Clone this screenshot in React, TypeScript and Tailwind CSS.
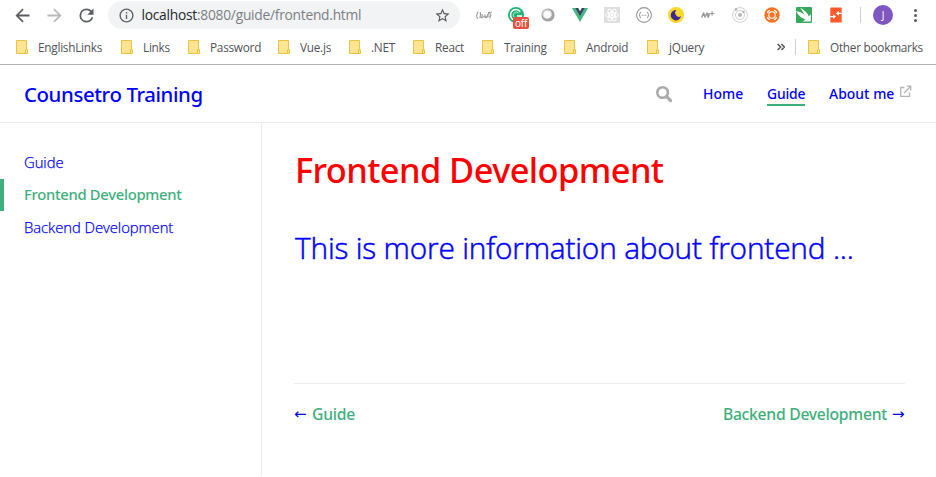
import type { ReactNode } from 'react';

function Glyph({ d, color, size = 21 }: { d: string; color: string; size?: number }) {
  return (
    <svg width={size} height={size} viewBox="0 0 24 24" fill={color} className="shrink-0">
      <path d={d} />
    </svg>
  );
}

function Slot({ children }: { children: ReactNode }) {
  return <div className="relative flex h-4 w-8 shrink-0 items-center justify-center">{children}</div>;
}

function Ext({ children }: { children: ReactNode }) {
  return (
    <svg width="16" height="16" viewBox="0 0 16 16" fill="none" className="shrink-0">
      {children}
    </svg>
  );
}

function Extensions() {
  return (
    <div className="ml-2 flex">
      <Slot>
        <Ext>
          <g stroke="#9a9a9a" strokeWidth="1.1" fill="none">
            <path d="M2.2 4.6Q-.6 8.3 1.8 12M4.4 5v5.5q2.3.8 2.4-1.2T4.6 8M9 7.5v2.8q1.8.8 2.5-.7V7.2M11.6 10l1-4.8M13.4 5.2h2.4M13 5l2 3.4-1.4 3" />
            <path d="M3 10.2 14 9" stroke="#a5a5a5" />
          </g>
        </Ext>
      </Slot>
      <Slot>
        <Ext>
          <circle cx="8" cy="8" r="8" fill="#1db574" />
          <path d="M12.3 4.8A5.4 5.4 0 1 0 13.2 9H9" stroke="#fff" strokeWidth="1.6" />
          <path d="M10.6 6.2A3 3 0 1 0 10.6 10" stroke="#c6eddc" strokeWidth=".9" />
        </Ext>
        <span className="absolute left-[13px] top-[10px] flex h-3 w-4 items-center justify-center rounded-[2px] bg-[#e8503f] font-['Open_Sans',sans-serif] text-[10px] leading-3 tracking-[-0.2px] text-white">
          off
        </span>
      </Slot>
      <Slot>
        <Ext>
          <circle cx="8" cy="8" r="6.6" fill="#a3a3a3" />
          <circle cx="7.2" cy="7.2" r="4.8" fill="#d9d9d9" />
          <circle cx="7.3" cy="7.6" r="3.7" fill="#fbfbfb" />
        </Ext>
      </Slot>
      <Slot>
        <Ext>
          <path d="M0 1h3.3L8 9.2 12.7 1H16L8 15z" fill="#41b883" />
          <path d="M3.2 1h3L8 4.2 9.8 1h3L8 9.4z" fill="#35495e" />
        </Ext>
      </Slot>
      <Slot>
        <Ext>
          <path fill="#dedede" d="M0 0h16v16H0z" />
          <g stroke="#fff" strokeWidth="1">
            <ellipse cx="8" cy="8" rx="6.5" ry="2.5" />
            <ellipse cx="8" cy="8" rx="6.5" ry="2.5" transform="rotate(60 8 8)" />
            <ellipse cx="8" cy="8" rx="6.5" ry="2.5" transform="rotate(120 8 8)" />
          </g>
          <circle cx="8" cy="8" r="1.4" fill="#fff" />
        </Ext>
      </Slot>
      <Slot>
        <Ext>
          <circle cx="8" cy="8" r="7.4" stroke="#999" strokeWidth="1.1" />
          <path d="M5.2 5Q4 5 4 6.4T3 8q1 .2 1 1.6T5.2 11M10.8 5Q12 5 12 6.4T13 8q-1 .2-1 1.6T10.8 11" stroke="#8c8c8c" />
          <path d="M5.8 8.3h1M7.6 8.3h1M9.4 8.3h1" stroke="#8c8c8c" />
        </Ext>
      </Slot>
      <Slot>
        <Ext>
          <circle cx="8" cy="8" r="8" fill="#fcd72b" />
          <path d="M8.4 3.1A5.2 5.2 0 1 0 13 9.3 3.9 3.9 0 0 1 8.4 3.1z" fill="#3b2b8c" />
        </Ext>
      </Slot>
      <Slot>
        <Ext>
          <path d="M1.6 10.5 3.6 6l1.4 4L7 6l1.3 4.2L9.4 6.3" stroke="#999" strokeWidth="1.5" strokeLinejoin="round" />
          <path d="M9.9 6.5h4.4M12.1 4.3v4.4" stroke="#999" strokeWidth="1.2" />
        </Ext>
      </Slot>
      <Slot>
        <Ext>
          <circle cx="8" cy="8" r="7.4" stroke="#d2d2d2" />
          <circle cx="8" cy="8" r="4.5" stroke="#cfcfcf" />
          <circle cx="8" cy="8" r="2" fill="#b9b9b9" />
          <circle cx="4" cy="2.4" r="1.3" fill="#b5b5b5" />
          <circle cx="11.6" cy="4.9" r="1.2" fill="#b5b5b5" />
        </Ext>
      </Slot>
      <Slot>
        <Ext>
          <circle cx="8" cy="8" r="7.7" fill="#f9701f" />
          <circle cx="8" cy="8" r="3.2" stroke="#fff" strokeWidth="1.1" />
          <path d="m3.4 6 .8-1.8L6 3.4M10 3.4l1.8.8.8 1.8M12.6 10l-.8 1.8-1.8.8M6 12.6l-1.8-.8L3.4 10" stroke="#fff" strokeWidth="1.4" />
        </Ext>
      </Slot>
      <Slot>
        <Ext>
          <rect width="16" height="16" rx="1" fill="#37a85b" />
          <path d="M0 4.2Q6.5 5 9 8.2L4.2.8Q10.6 4 12.6 9.2l2.2-2v7.2H7l2.4-2.2Q3.6 10.8 0 4.2z" fill="#fff" />
        </Ext>
      </Slot>
      <Slot>
        <Ext>
          <rect x="2.3" y=".4" width="11.4" height="15.2" rx=".8" fill="#ff5a2b" />
          <path d="M13.7 6.4H9.6M2.3 9.6h4" stroke="#fff" strokeWidth="1.4" />
          <path d="M10.8 4v4.8L8 6.4zM5.2 7.2V12L8 9.6z" fill="#fff" />
        </Ext>
      </Slot>
    </div>
  );
}

function Toolbar() {
  return (
    <div className="flex h-[31px] items-center pb-px">
      <div className="ml-[11.5px] flex w-[96.5px] gap-[11px]">
        <Glyph color="#5a5d61" d="M20 10.9H7.9l5.5-5.5L12 4l-8 8 8 8 1.4-1.4-5.5-5.5H20z" />
        <Glyph color="#bababa" d="M4 10.9h12.1l-5.5-5.5L12 4l8 8-8 8-1.4-1.4 5.5-5.5H4z" />
        <Glyph
          color="#5a5d61"
          d="M17.65 6.35A7.96 7.96 0 0 0 12 4a8 8 0 1 0 7.73 10h-2.08A6 6 0 1 1 12 6c1.66 0 3.14.69 4.22 1.78L13 11h7V4z"
        />
      </div>
      <div className="flex h-7 w-[352px] items-center rounded-full bg-[#f1f3f4] pl-[9.5px] pr-[9.5px]">
        <Glyph
          size={17}
          color="#5f6368"
          d="M11 7h2v2h-2zm0 4h2v6h-2zm1-9a10 10 0 1 0 0 20 10 10 0 0 0 0-20zm0 18a8 8 0 1 1 0-16 8 8 0 0 1 0 16z"
        />
        <span className="ml-[7px] whitespace-nowrap text-[13.8px] leading-5 tracking-[-0.26px] text-[#7b7f84]">
          <span className="text-[#25282c]">localhost</span>:8080/guide/frontend.html
        </span>
        <div className="ml-auto">
          <Glyph
            size={17}
            color="#5a5d61"
            d="m22 9.24-7.19-.62L12 2 9.19 8.63 2 9.24l5.46 4.73L5.82 21 12 17.27 18.18 21l-1.63-7.03zM12 15.4l-3.76 2.27 1-4.28-3.32-2.88 4.38-.38L12 6.1l1.71 4.04 4.38.38-3.32 2.88 1 4.28z"
          />
        </div>
      </div>
      <Extensions />
      <div className="ml-2 h-4 w-px bg-[#d0d0d0]" />
      <div className="ml-3 flex size-5 items-center justify-center rounded-full bg-[#7e57c2] text-[10px] text-white">J</div>
      <div className="ml-[21px] flex flex-col gap-[2px]">
        <i className="size-[3px] rounded-full bg-[#5a5d61]" />
        <i className="size-[3px] rounded-full bg-[#5a5d61]" />
        <i className="size-[3px] rounded-full bg-[#5a5d61]" />
      </div>
    </div>
  );
}

function Bookmark({ label, width }: { label: string; width: string }) {
  return (
    <div className={`flex shrink-0 items-center ${width}`}>
      <svg width="12" height="14" viewBox="0 0 12 14" className="shrink-0">
        <path d="M.5.5h10v9.2h1v3.8H.5z" fill="#ffe591" stroke="#e9c341" />
        <path d="M9.5 13V9.7h1.4" fill="none" stroke="#e9c341" />
      </svg>
      <span className="ml-[10px] whitespace-nowrap text-[11.8px] leading-4 tracking-[-0.26px] text-[#515357]">{label}</span>
    </div>
  );
}

function Bookmarks() {
  return (
    <div className="flex h-[34px] items-center border-b border-[#b2b2b2] pl-4 pb-px">
      <Bookmark label="EnglishLinks" width="w-[105px]" />
      <Bookmark label="Links" width="w-[67px]" />
      <Bookmark label="Password" width="w-[90px]" />
      <Bookmark label="Vue.js" width="w-[71px]" />
      <Bookmark label=".NET" width="w-[64px]" />
      <Bookmark label="React" width="w-[69px]" />
      <Bookmark label="Training" width="w-[82px]" />
      <Bookmark label="Android" width="w-[83px]" />
      <Bookmark label="jQuery" width="w-[130px]" />
      <svg width="8" height="8" viewBox="0 0 8 8" fill="none" stroke="#55585c" strokeWidth="1.6">
        <path d="m.6 1 3 3-3 3M4.4 1l3 3-3 3" />
      </svg>
      <div className="ml-[10px] mr-3 h-4 w-px bg-[#d0d0d0]" />
      <Bookmark label="Other bookmarks" width="w-[120px]" />
    </div>
  );
}

function Header() {
  return (
    <header className="flex h-[58px] items-center border-b border-[#eaecef] pl-6 text-[#0000ff]">
      <div className="w-[631px] whitespace-nowrap pt-[2px] font-['Noto_Sans',sans-serif] text-[20.4px] font-medium tracking-[-0.4px]">
        Counsetro Training
      </div>
      <svg width="18" height="18" viewBox="0 0 18 18" fill="none" stroke="#aaa" className="mt-px">
        <circle cx="7.6" cy="7.5" r="5.3" strokeWidth="2.6" />
        <path d="m11.4 11.4 4.2 4.2" strokeWidth="3.2" strokeLinecap="round" />
      </svg>
      <nav className="ml-[30px] flex h-6 font-['Noto_Sans',sans-serif] text-[13.9px] font-medium leading-6">
        <a className="w-16 tracking-[0.05px]">Home</a>
        <a className="mr-6 w-[38px] whitespace-nowrap border-b-2 border-[#3eaf7c] tracking-[-0.15px]">Guide</a>
        <a className="w-[70px] whitespace-nowrap tracking-[0.05px]">About me</a>
        <svg width="13" height="13" viewBox="0 0 13 13" fill="none" stroke="#b5b5b5" strokeWidth="1.3" className="mt-[3px]">
          <path d="M5.5 2.5H1.7v8.8h8.8V7.5M5 8l6-6M7.5 1.2h4.2v4.2" />
        </svg>
      </nav>
    </header>
  );
}

export default function App() {
  return (
    <div className="flex h-[477px] w-[936px] flex-col overflow-hidden bg-white font-['Open_Sans','Noto_Sans',sans-serif]">
      <Toolbar />
      <Bookmarks />
      <Header />
      <div className="flex flex-1">
        <aside className="h-[353px] w-[262px] border-r border-[#eaecef] pt-6 text-[14.8px] leading-[30px] text-[#0000ff]">
          <div className="h-8 pl-6 font-light tracking-[-0.05px] [-webkit-text-stroke:0.25px]">Guide</div>
          <div className="h-8 border-l-4 border-[#3eaf7c] pl-5 font-['Noto_Sans',sans-serif] font-medium tracking-[-0.3px] text-[#3eaf7c]">
            Frontend Development
          </div>
          <div className="h-8 pl-6 pt-px font-light tracking-[-0.04px] [-webkit-text-stroke:0.25px]">Backend Development</div>
        </aside>
        <main className="w-[643px] pl-8">
          <h1 className="mt-6 h-[46px] whitespace-nowrap pl-px font-['Noto_Sans',sans-serif] text-[34.4px] font-medium leading-[46px] tracking-[-0.58px] text-[#ff0000]">
            Frontend Development
          </h1>
          <p className="mt-[35px] h-10 whitespace-nowrap pl-px text-[29.8px] font-light leading-10 tracking-[-0.17px] text-[#0000ff] [-webkit-text-stroke:0.5px]">
            This is more information about frontend ...
          </p>
          <div className="mt-[115px] flex justify-between border-t border-[#eaecef] pt-[18px] font-['Noto_Sans',sans-serif] text-[15.7px] font-medium leading-6 tracking-[-0.26px] text-[#3eaf7c]">
            <span className="flex">
              <span className="w-[18px] font-['DejaVu_Sans',sans-serif] text-[15px] font-normal text-[#0000d8]">←</span>
              Guide
            </span>
            <span className="flex">
              Backend Development
              <span className="ml-[5px] w-[13px] font-['DejaVu_Sans',sans-serif] text-[15px] font-normal text-[#0000d8]">→</span>
            </span>
          </div>
        </main>
      </div>
    </div>
  );
}
